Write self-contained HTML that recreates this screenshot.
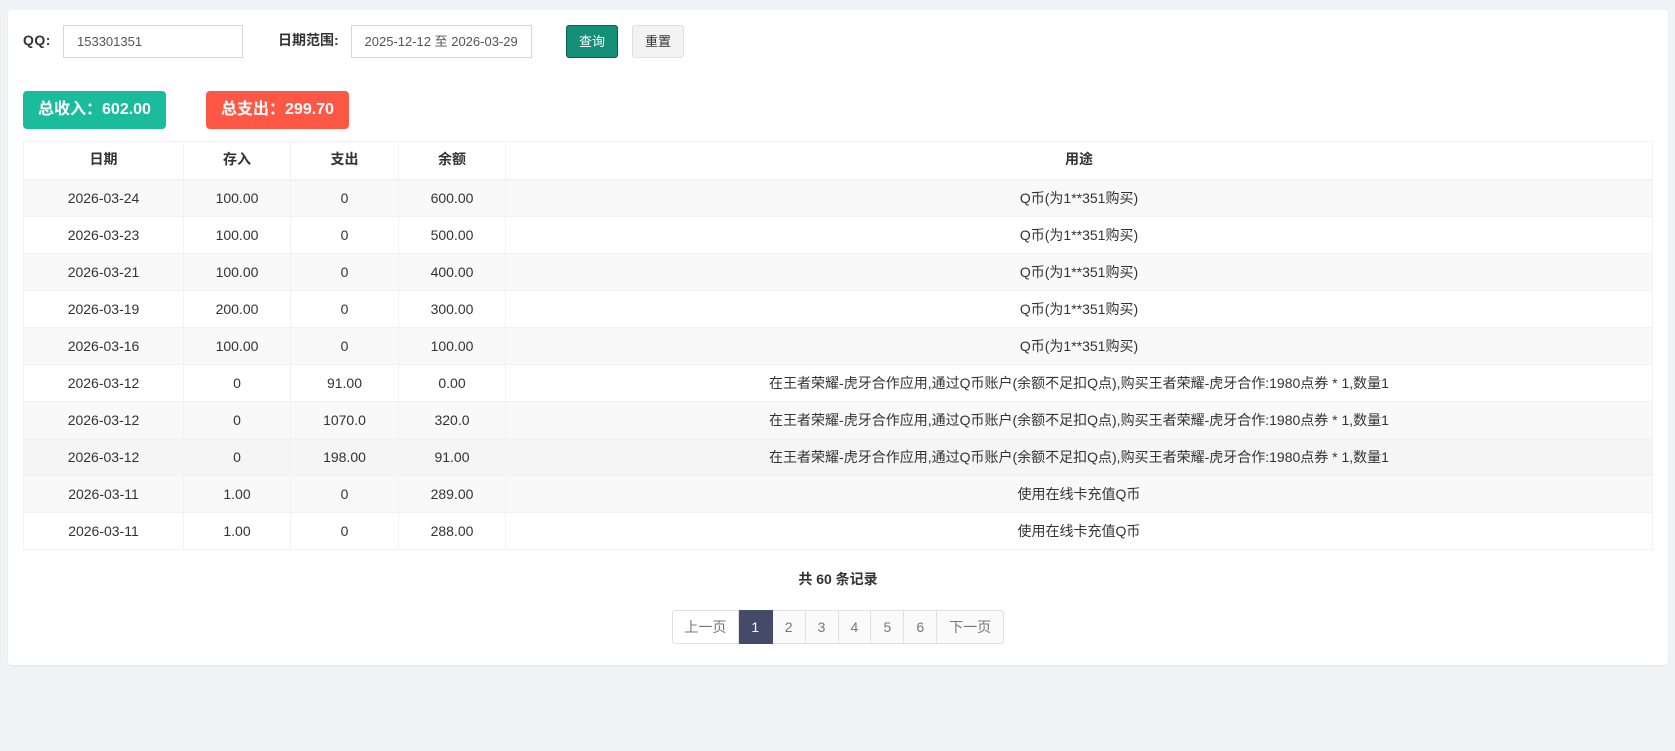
<!DOCTYPE html>
<html lang="zh-CN">
<head>
<meta charset="utf-8">
<title>Q币记录</title>
<style>
*{box-sizing:border-box}
html,body{margin:0;padding:0;width:1675px;height:751px;overflow:hidden;background:#f0f3f6;font-family:"Liberation Sans","WenQuanYi Zen Hei","Noto Sans CJK SC",sans-serif;font-size:14px;color:#333}
.card{position:absolute;left:8px;top:10px;width:1660px;height:655px;background:#fff;border-radius:4px;box-shadow:0 1px 2px rgba(0,0,0,.06)}
.abs{position:absolute;white-space:nowrap}
.lab{font-weight:bold;line-height:20px;font-size:14px;color:#333}
.inp{height:33px;border:1px solid #d5d5e2;background:#fff;line-height:31px;padding-left:13px;color:#555;font-size:13px}
.btn{height:33px;border-radius:3px;line-height:31px;text-align:center;font-size:13px;top:25px}
.stat{top:91px;height:38px;line-height:38px;border-radius:4px;color:#fff;font-weight:bold;font-size:16px;text-align:center;width:143px}
table{position:absolute;left:23px;top:141px;width:1630px;border-collapse:collapse;table-layout:fixed;font-size:14px;color:#333;background:#fff}
th,td{border:1px solid #f2f2f2;text-align:center;padding:0;font-size:14px}
th{height:38px;font-weight:bold;border-bottom-width:2px;padding-bottom:3px}
td{height:37px;padding-bottom:1px}
tr.g td{background:#f9f9f9}
tr.h td{background:#f5f5f5}
.total{position:absolute;left:8px;width:1660px;top:569px;line-height:20px;text-align:center;font-weight:bold;font-size:14px;color:#333}
.pg{position:absolute;left:672px;top:610px;height:34px;width:332px;display:flex;font-size:14px;color:#777}
.pg div{border:1px solid #e0e0e0;border-left:0;height:34px;line-height:32px;text-align:center;background:#fafafa;white-space:nowrap}
.pg .f{border-left:1px solid #e0e0e0;background:#fff;border-radius:3px 0 0 3px;width:67px}
.pg .a{background:#444b69;border-color:#444b69;color:#fff;width:34px}
.pg .n{width:33px}
.pg .l{border-radius:0 3px 3px 0;width:67px}
</style>
</head>
<body>
<div class="card"></div>
<div class="abs lab" style="left:23px;top:30px;letter-spacing:.5px">QQ:</div>
<div class="abs inp" style="left:63px;top:25px;width:180px">153301351</div>
<div class="abs lab" style="left:278px;top:30px">日期范围:</div>
<div class="abs inp" style="left:351px;top:25px;width:181px;padding-left:12.5px">2025-12-12 至 2026-03-29</div>
<div class="abs btn" style="left:566px;width:52px;background:#138f75;border:1px solid #0d5f4e;color:#fff">查询</div>
<div class="abs btn" style="left:632px;width:52px;background:#f3f3f3;border:1px solid #e0e0e0;color:#333">重置</div>
<div class="abs stat" style="left:23px;background:#1abc9c">总收入：602.00</div>
<div class="abs stat" style="left:206px;background:#ff5746">总支出：299.70</div>
<table>
<colgroup><col style="width:160px"><col style="width:107px"><col style="width:108px"><col style="width:107px"><col></colgroup>
<tr><th>日期</th><th>存入</th><th>支出</th><th>余额</th><th>用途</th></tr>
<tr class="g"><td>2026-03-24</td><td>100.00</td><td>0</td><td>600.00</td><td>Q币(为1**351购买)</td></tr>
<tr><td>2026-03-23</td><td>100.00</td><td>0</td><td>500.00</td><td>Q币(为1**351购买)</td></tr>
<tr class="g"><td>2026-03-21</td><td>100.00</td><td>0</td><td>400.00</td><td>Q币(为1**351购买)</td></tr>
<tr><td>2026-03-19</td><td>200.00</td><td>0</td><td>300.00</td><td>Q币(为1**351购买)</td></tr>
<tr class="g"><td>2026-03-16</td><td>100.00</td><td>0</td><td>100.00</td><td>Q币(为1**351购买)</td></tr>
<tr><td>2026-03-12</td><td>0</td><td>91.00</td><td>0.00</td><td>在王者荣耀-虎牙合作应用,通过Q币账户(余额不足扣Q点),购买王者荣耀-虎牙合作:1980点券 * 1,数量1</td></tr>
<tr class="g"><td>2026-03-12</td><td>0</td><td>1070.0</td><td>320.0</td><td>在王者荣耀-虎牙合作应用,通过Q币账户(余额不足扣Q点),购买王者荣耀-虎牙合作:1980点券 * 1,数量1</td></tr>
<tr class="h"><td>2026-03-12</td><td>0</td><td>198.00</td><td>91.00</td><td>在王者荣耀-虎牙合作应用,通过Q币账户(余额不足扣Q点),购买王者荣耀-虎牙合作:1980点券 * 1,数量1</td></tr>
<tr class="g"><td>2026-03-11</td><td>1.00</td><td>0</td><td>289.00</td><td>使用在线卡充值Q币</td></tr>
<tr><td>2026-03-11</td><td>1.00</td><td>0</td><td>288.00</td><td>使用在线卡充值Q币</td></tr>
</table>
<div class="total">共 60 条记录</div>
<div class="pg">
<div class="f">上一页</div><div class="a">1</div><div class="n">2</div><div class="n">3</div><div class="n">4</div><div class="n">5</div><div class="n">6</div><div class="l">下一页</div>
</div>
</body>
</html>
